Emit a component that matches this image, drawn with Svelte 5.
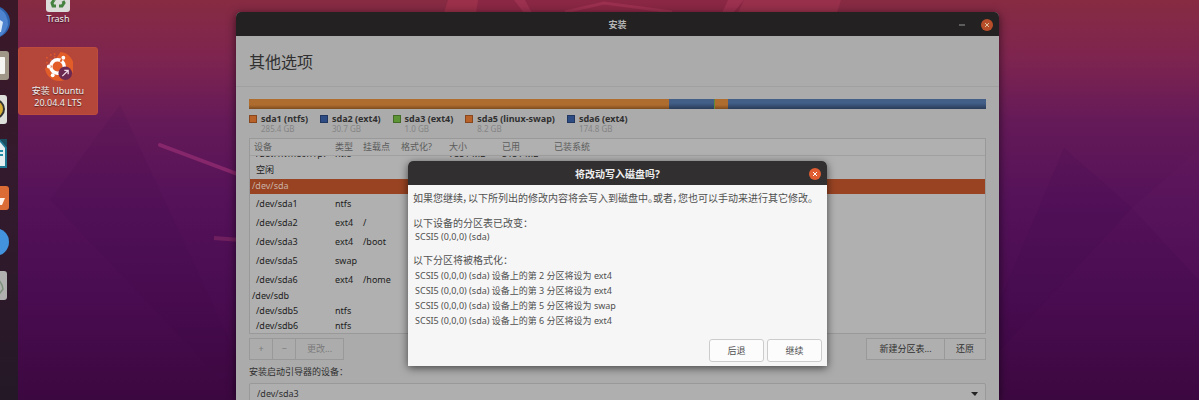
<script>
  const partitions = [
    { name: 'sda1 (ntfs)', size: '285.4 GB', color: 'orange' },
    { name: 'sda2 (ext4)', size: '30.7 GB', color: 'blue' },
    { name: 'sda3 (ext4)', size: '1.0 GB', color: 'green' },
    { name: 'sda5 (linux-swap)', size: '8.2 GB', color: 'orange' },
    { name: 'sda6 (ext4)', size: '174.8 GB', color: 'blue' }
  ];

  const segments = [
    { color: 'orange', share: 420 },
    { color: 'blue', share: 45 },
    { color: 'green', share: 1 },
    { color: 'orange', share: 13 },
    { color: 'blue', share: 258 }
  ];

  const columns = ['设备', '类型', '挂载点', '格式化?', '大小', '已用', '已装系统'];

  const rows = [
    { device: '空闲', kind: 'free' },
    { device: '/dev/sda', kind: 'disk selected' },
    { device: '/dev/sda1', type: 'ntfs', kind: 'tall' },
    { device: '/dev/sda2', type: 'ext4', mount: '/', kind: 'tall' },
    { device: '/dev/sda3', type: 'ext4', mount: '/boot', kind: 'tall' },
    { device: '/dev/sda5', type: 'swap', kind: 'tall' },
    { device: '/dev/sda6', type: 'ext4', mount: '/home', kind: 'tall' },
    { device: '/dev/sdb', kind: 'disk' },
    { device: '/dev/sdb5', type: 'ntfs', kind: '' },
    { device: '/dev/sdb6', type: 'ntfs', kind: '' }
  ];

  const formats = [
    { part: 2, fs: 'ext4' },
    { part: 3, fs: 'ext4' },
    { part: 5, fs: 'swap' },
    { part: 6, fs: 'ext4' }
  ];
</script>

<main class="desktop">
  <svg class="wallpaper" viewBox="0 0 1199 400" preserveAspectRatio="none" aria-hidden="true">
    <path d="M454 0H826L838 12H444Z" fill="#8a2745" />
    <path d="M448 0H478L476 13H444Z" fill="#9b304a" />
    <path d="M744 0H841L837 13H738Z" fill="#98304b" />
    <path d="M514 0H525L532 13H524ZM728 0H744L733 13H722Z" fill="#9b304f" />
    <path d="M565 12L604 3L672 12" fill="none" stroke="#9b304f" stroke-width="3" />
    <path d="M160 145L240 175" stroke="#87276b" stroke-width="4" stroke-linecap="round" />
    <path d="M214 238L240 240" stroke="#70205f" stroke-width="4" />
    <path d="M120 105L240 362V400L50 200Z" fill="#3c0848" opacity=".1" />
    <path d="M1064 148L1132 208L1000 350V300Z" fill="#3c0848" opacity=".12" />
    <path d="M1132 208L1199 150V280Z" fill="#7a2468" opacity=".1" />
  </svg>

  <nav class="dock" aria-label="Dock">
    <svg viewBox="0 0 18 400" aria-hidden="true">
      <circle cx="-6" cy="22" r="16" fill="#2f62ad" />
      <path d="M-2 8Q8 12 8 25Q5 34 0 36Z" fill="#4d83cf" />
      <path d="M0 20L3 22L1 32H-2Z" fill="#d8e8f8" />
      <rect x="-20" y="51" width="29" height="29" rx="3" fill="#a09788" />
      <rect x="-20" y="57" width="25" height="17" rx="1" fill="#f5f4f1" />
      <rect x="-20" y="95" width="27" height="29" rx="3" fill="#dededb" />
      <circle cx="-5" cy="109" r="10" fill="#333" />
      <circle cx="-5" cy="109" r="8" fill="#d8ad35" />
      <circle cx="-5" cy="109" r="5" fill="#3a3a38" />
      <path d="M-20 139H0L7 147V168H-20Z" fill="#1f7894" />
      <path d="M-20 142H0L5 148V166H-20Z" fill="#e5eff1" />
      <path d="M0 139H7V147Z" fill="#194e61" />
      <path d="M0 151H3M0 155H3" stroke="#218ba6" stroke-width="2" />
      <rect x="-20" y="186" width="29" height="24" rx="3" fill="#dc6c35" />
      <path d="M-2 198H5L2 205H-2Z" fill="#fff1e8" />
      <circle cx="-5" cy="242" r="14" fill="#4292dd" />
      <rect x="-20" y="271" width="27" height="29" rx="3" fill="#b0b0b0" />
      <path d="M-1 280L2 285L3 289L0 293H-3" fill="none" stroke="#7c917c" stroke-width="1.5" />
    </svg>
  </nav>

  <section class="shortcuts" aria-label="Desktop">
    <a class="shortcut" href="#trash">
      <svg class="trash" viewBox="0 0 24 24" aria-hidden="true">
        <rect width="24" height="24" rx="3" fill="#dcdcda" />
        <g fill="none" stroke="#44823f" stroke-width="3">
          <path d="M8 12L11 7H14L16 10" />
          <path d="M17 13L18 15L16 18H13" />
          <path d="M10 18H7L6 15L8 12" />
        </g>
      </svg>
      <span>Trash</span>
    </a>
    <a class="shortcut active" href="#install">
      <svg class="logo" viewBox="0 0 30 30" aria-hidden="true">
        <path d="M17 0A15 15 0 1 1 1 17L7 12L13 6Z" fill="#e35d28" />
        <g fill="#dc5a2b"><circle cx="3" cy="6" r="1" /><circle cx="7" cy="3" r="1" /><circle cx="7" cy="8" r="1" /><circle cx="3" cy="11" r="1" /><circle cx="11" cy="2" r="1" /><circle cx="11" cy="5" r="1" /></g>
        <circle cx="14" cy="15" r="7" fill="none" stroke="#fff" stroke-width="3.5" />
        <path d="M8 15H3M17 10L20 5M17 20L20 25" stroke="#e35d28" stroke-width="2" />
        <circle cx="5" cy="15" r="2" fill="#fff" />
        <circle cx="20" cy="6" r="2" fill="#fff" />
        <circle cx="9" cy="24" r="2" fill="#fff" />
        <circle cx="22" cy="22" r="7" fill="#6b2951" />
        <path d="M19 25L25 19M21 19H25V23" fill="none" stroke="#f3dce8" stroke-width="1.3" />
      </svg>
      <span>安装 Ubuntu<br />20.04.4 LTS</span>
    </a>
  </section>

  <section class="window" aria-label="安装">
    <header class="titlebar">
      <strong>安装</strong>
      <div class="controls">
        <button class="minimize" aria-label="最小化"><svg viewBox="0 0 6 6"><path d="M0 3H6" stroke="#999" /></svg></button>
        <button class="close" aria-label="关闭"><svg viewBox="0 0 12 12"><path d="M4 4L8 8M8 4L4 8" stroke="currentColor" /></svg></button>
      </div>
    </header>
    <h1>其他选项</h1>
    <div class="content">
      <div class="usage">
        {#each segments as segment}
          <i class={segment.color} style="flex-grow: {segment.share}"></i>
        {/each}
      </div>
      <ul class="legend">
        {#each partitions as part}
          <li><i class={part.color}></i><div><b>{part.name}</b><small>{part.size}</small></div></li>
        {/each}
      </ul>
      <div class="list">
        <table>
          <colgroup>
            <col class="c-device" /><col class="c-type" /><col class="c-mount" /><col class="c-format" />
            <col class="c-size" /><col class="c-used" /><col />
          </colgroup>
          <thead>
            <tr>{#each columns as column}<th>{column}</th>{/each}</tr>
          </thead>
          <tbody>
            <tr class="scrolled">
              <td><div>/dev/nvme0n1p7</div></td><td><div>ntfs</div></td><td></td><td></td>
              <td><div>7551 MB</div></td><td><div>5151 MB</div></td><td></td>
            </tr>
            {#each rows as row}
              <tr class={row.kind}>
                <td>{row.device}</td><td>{row.type ?? ''}</td><td>{row.mount ?? ''}</td>
                <td></td><td></td><td></td><td></td>
              </tr>
            {/each}
          </tbody>
        </table>
      </div>
      <div class="toolbar">
        <div class="group">
          <button class="square" disabled>+</button><button class="square" disabled>−</button><button class="change" disabled>更改...</button>
        </div>
        <div class="group">
          <button class="table-new">新建分区表...</button><button class="revert">还原</button>
        </div>
      </div>
      <label for="boot-device">安装启动引导器的设备：</label>
      <div class="select">
        <select id="boot-device"><option>/dev/sda3</option></select>
        <svg viewBox="0 0 8 4" aria-hidden="true"><path d="M0 0H7L4 4Z" fill="#222" /></svg>
      </div>
    </div>
  </section>

  <div class="dialog" role="dialog" aria-labelledby="dialog-title">
    <header class="titlebar">
      <strong id="dialog-title">将改动写入磁盘吗?</strong>
      <div class="controls">
        <button class="close" aria-label="关闭"><svg viewBox="0 0 12 12"><path d="M4 4L8 8M8 4L4 8" stroke="currentColor" /></svg></button>
      </div>
    </header>
    <div class="message">
      <p class="intro">如果您继续，以下所列出的修改内容将会写入到磁盘中。或者，您也可以手动来进行其它修改。</p>
      <p>以下设备的分区表已改变：</p>
      <ul><li>SCSI5 (0,0,0) (sda)</li></ul>
      <p class="second">以下分区将被格式化：</p>
      <ul class="formats">
        {#each formats as item}
          <li>SCSI5 (0,0,0) (sda) 设备上的第 {item.part} 分区将设为 {item.fs}</li>
        {/each}
      </ul>
    </div>
    <footer>
      <button>后退</button>
      <button>继续</button>
    </footer>
  </div>
</main>

<style>
  :global(body) { margin: 0; }
  * { box-sizing: border-box; }
  .desktop {
    position: relative;
    display: flex;
    height: 100vh;
    overflow: hidden;
    font: 9px/12px "Noto Sans", "Noto Sans CJK SC", sans-serif;
    color: #303030;
    background: linear-gradient(#872b42, #7d2450 15%, #651a58 30%, #551259 50%, #490c50 75%, #3c0840);
  }
  h1, p, ul { margin: 0; padding: 0; font-weight: 400; }
  ul { list-style: none; }
  button, select { font: inherit; color: inherit; padding: 0; margin: 0; }
  svg { display: block; }
  .wallpaper { position: absolute; inset: 0; width: 100%; height: 100%; }
  .dock { position: relative; width: 18px; background: linear-gradient(#3a1828, #321a2d 50%, #241826); }
  .dock svg { width: 18px; height: 400px; }

  .shortcuts { position: relative; width: 80px; }
  .shortcut { display: flex; flex-direction: column; align-items: center; gap: 1px; color: #eee; text-align: center; text-decoration: none; text-shadow: 0 1px 1px #0008; }
  .shortcut .trash { width: 24px; height: 24px; margin-top: -12px; }
  .shortcut.active { gap: 4px; margin-top: 22px; height: 68px; padding-top: 4px; background: #b4463a; border: 1px solid #bd4c3d; border-radius: 3px; }
  .logo { width: 29px; height: 29px; }

  .window { position: absolute; left: 236px; right: 200px; top: 12px; bottom: 0; background: #ababab; border-radius: 5px 5px 0 0; box-shadow: 0 2px 10px #0009; }
  .titlebar { display: grid; grid-template-columns: 1fr auto 1fr; align-items: center; height: 24px; padding: 1px 6px 0; border-radius: 5px 5px 0 0; background: #232122; color: #b5b5b5; }
  .titlebar strong { grid-column: 2; }
  .controls { display: flex; justify-content: flex-end; align-items: center; gap: 16px; }
  .controls button { border: 0; background: none; }
  .minimize svg { width: 6px; height: 6px; }
  .close svg { width: 12px; height: 12px; border-radius: 50%; background: #b84e29; color: #ddc6a0; }
  h1 { height: 51px; padding: 0 13px; font-size: 16px; line-height: 53px; border-bottom: 1px solid #a0a0a0; }
  .content { padding: 12px 13px 0; }
  .usage { display: flex; height: 10px; }
  .usage i { flex-basis: 0; }
  .usage .orange { background: linear-gradient(#ae6c2f 60%, #7d4b1d); }
  .usage .blue { background: linear-gradient(#435f88 40%, #2a3c58); }
  .usage .green { background: #5c8a38; }
  .legend { display: flex; gap: 12px; height: 29px; padding-top: 4px; }
  .legend li { display: flex; gap: 4px; }
  .legend li > i { width: 8px; height: 8px; margin-top: 2px; border: 1px solid #0004; }
  .legend .orange { background: #b8622a; }
  .legend .blue { background: #2d4c84; }
  .legend .green { background: #5d9435; }
  .legend b, .legend small { display: block; }
  .legend small { font-size: 8px; line-height: 8px; color: #858585; }

  .list { height: 196px; overflow: hidden; border: 1px solid #999; background: #b0b0b0; }
  table { width: 100%; table-layout: fixed; border-collapse: collapse; color: #1c1c1c; }
  .c-device { width: 81px; }
  .c-type { width: 28px; }
  .c-mount { width: 38px; }
  .c-format { width: 48px; }
  .c-size { width: 53px; }
  .c-used { width: 52px; }
  th, td { padding: 0 0 0 4px; text-align: left; white-space: nowrap; font-weight: 400; }
  th { height: 16px; color: #5c5c5c; border-bottom: 1px solid #a0a0a0; }
  td { height: 15px; }
  td:first-child { padding-left: 6px; }
  .scrolled td { height: 5px; }
  .scrolled div { display: flex; align-items: flex-end; height: 5px; overflow: hidden; line-height: 14px; }
  .free td { height: 18px; }
  .tall td { height: 19px; padding-top: 1px; }
  .disk td:first-child { padding-left: 2px; }
  .selected td { background: #994322; color: #c9b3a8; }

  .toolbar { display: flex; justify-content: space-between; padding: 4px 0 3px; }
  .group { display: flex; }
  .group button { height: 22px; border: 1px solid #999; background: #afafaf; }
  .group button + button { margin-left: -1px; }
  .group button:disabled { color: #7a7a7a; background: #acacac; }
  .square { width: 24px; }
  .change { width: 49px; }
  .table-new { width: 79px; }
  .revert { width: 42px; }
  label { display: block; margin-top: 3px; }
  .select { position: relative; margin-top: 5px; }
  select { width: 100%; height: 22px; padding-left: 7px; appearance: none; border: 1px solid #999; border-radius: 2px; background: #afafaf; }
  .select svg { position: absolute; right: 7px; top: 9px; width: 8px; height: 4px; }

  .dialog { position: absolute; left: 408px; right: 372px; top: 161px; display: flex; flex-direction: column; height: 205px; background: #f6f6f6; border-radius: 5px 5px 0 0; box-shadow: 0 2px 8px #0009; color: #505050; }
  .dialog .titlebar { background: #322f30; color: #eee; font-size: 10px; }
  .dialog .close svg { background: #e05d32; color: #fff; }
  .message { flex: 1; padding: 7px 5px 0; font-size: 10px; line-height: 13px; white-space: nowrap; }
  .intro { margin-bottom: 12px; font-feature-settings: "palt"; }
  .message li { padding-left: 2px; font-size: 9px; }
  .second { margin-top: 11px; }
  .formats { line-height: 15px; margin-top: 1px; }
  footer { display: flex; justify-content: flex-end; gap: 3px; padding: 0 5px 4px; }
  footer button { width: 55px; height: 23px; border: 1px solid #ccc; border-radius: 3px; background: #fcfcfc; }
</style>
